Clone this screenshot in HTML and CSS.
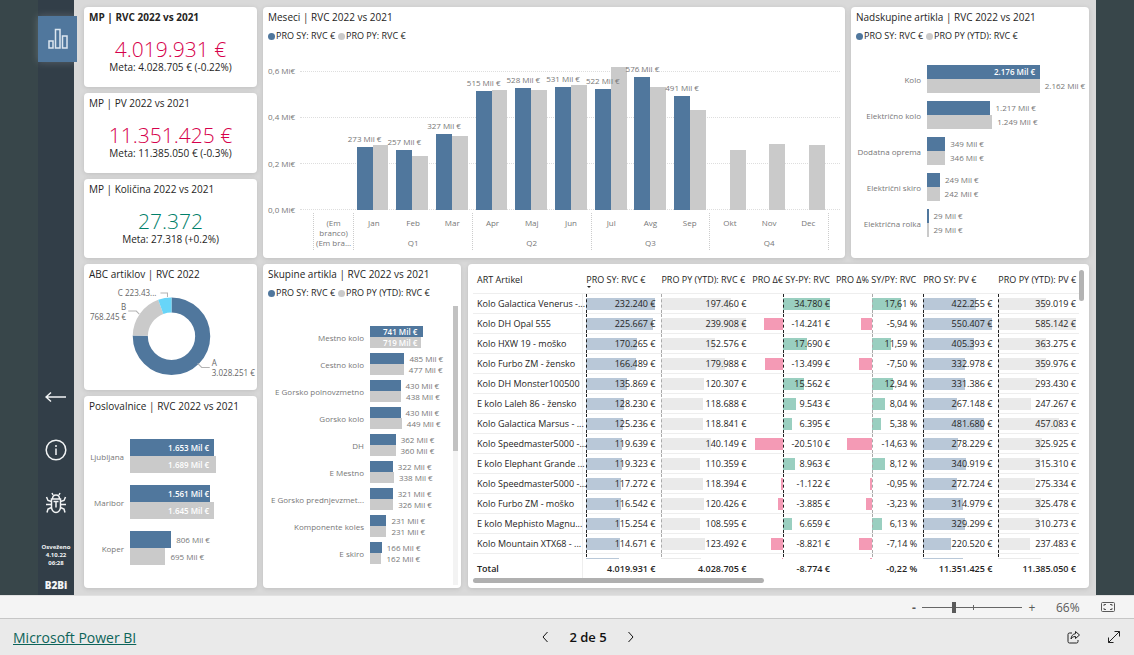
FILE: index.html
```html
<!DOCTYPE html>
<html lang="sl">
<head>
<meta charset="utf-8">
<title>Microsoft Power BI</title>
<link rel="stylesheet" href="styles.css">
</head>
<body>
<main class="stage">
  <nav class="rail" aria-label="Strani">
    <button class="rail-btn active" aria-label="Prodaja">
      <svg width="22" height="22" viewBox="0 0 22 22"><path d="M2 13h4v7H2zM8.500 1.500h4.500V20H8.500zM15.500 8H20v12h-4.500z"/></svg>
    </button>
    <div class="rail-bottom">
      <button class="rail-btn" aria-label="Nazaj"><svg width="22" height="12" viewBox="0 0 22 12"><path d="M1 6h20M6 1.500L1 6l5 4.500"/></svg></button>
      <button class="rail-btn" aria-label="Informacije"><svg width="22" height="22" viewBox="0 0 22 22"><circle cx="11" cy="11" r="9.800"/><path d="M11 9.500v6.500M11 6v2"/></svg></button>
      <button class="rail-btn" aria-label="Prijavi napako"><svg width="22" height="22" viewBox="0 0 22 22"><path d="M6.500 7h9v8c0 3-2 5.500-4.500 5.500S6.500 18 6.500 15zM7.500 7c0-2.500 1.500-4 3.500-4s3.500 1.500 3.500 4M8 3L7 1M14 3l1-2M11 9.500v6M8.500 9.500h5M6.500 12.500H1M15.500 12.500H21M6.500 9.500L3 8.500 1.500 5M15.500 9.500l3.500-1 1.500-3.500M6.500 15.500L3 17l-1 3.500M15.500 15.500L19 17l1 3.500"/></svg></button>
      <p class="refreshed">Osveženo<br>4.10.22<br>06:28</p>
      <p class="logo">B2Bi</p>
    </div>
  </nav>

  <div class="report">
    <div class="side">
      <section class="card kpi">
        <h2 class="strong">MP | RVC 2022 vs 2021</h2>
        <p class="big down">4.019.931 €</p>
        <p class="meta">Meta: 4.028.705 € (-0.22%)</p>
      </section>
      <section class="card kpi">
        <h2>MP | PV 2022 vs 2021</h2>
        <p class="big down">11.351.425 €</p>
        <p class="meta">Meta: 11.385.050 € (-0.3%)</p>
      </section>
      <section class="card kpi">
        <h2>MP | Količina 2022 vs 2021</h2>
        <p class="big up">27.372</p>
        <p class="meta">Meta: 27.318 (+0.2%)</p>
      </section>
      <section class="card">
        <h2>ABC artiklov | RVC 2022</h2>
        <svg class="donut" viewBox="0 0 162 100">
          <g fill="none" stroke-width="15">
            <circle cx="82" cy="52" r="31" pathLength="1000" stroke="#50779d" stroke-dasharray="753 247" transform="rotate(-90 82 52)"/>
            <circle cx="82" cy="52" r="31" pathLength="1000" stroke="#cacaca" stroke-dasharray="191 809" stroke-dashoffset="-753" transform="rotate(-90 82 52)"/>
            <circle cx="82" cy="52" r="31" pathLength="1000" stroke="#68d5f8" stroke-dasharray="56 944" stroke-dashoffset="-944" transform="rotate(-90 82 52)"/>
          </g>
          <path class="lead" d="M71 9h7v4M39 27h8l3 3M108 79l4 4h8"/>
          <text x="67" y="12" text-anchor="end">C 223.43...</text>
          <text x="37" y="26" text-anchor="end">B</text>
          <text x="37" y="36" text-anchor="end">768.245 €</text>
          <text x="122" y="82">A</text>
          <text x="122" y="92">3.028.251 €</text>
        </svg>
      </section>
      <section class="card">
        <h2>Poslovalnice | RVC 2022 vs 2021</h2>
        <div class="hbars stores">
          <div class="row"><span class="name">Ljubljana</span><div class="pair"><div class="line in"><i class="sy" style="--v:1653"></i><span>1.653 Mil €</span></div><div class="line in"><i class="py" style="--v:1689"></i><span>1.689 Mil €</span></div></div></div>
          <div class="row"><span class="name">Maribor</span><div class="pair"><div class="line in"><i class="sy" style="--v:1561"></i><span>1.561 Mil €</span></div><div class="line in"><i class="py" style="--v:1645"></i><span>1.645 Mil €</span></div></div></div>
          <div class="row"><span class="name">Koper</span><div class="pair"><div class="line"><i class="sy" style="--v:806"></i><span>806 Mil €</span></div><div class="line"><i class="py" style="--v:695"></i><span>695 Mil €</span></div></div></div>
        </div>
      </section>
    </div>

    <div class="wide">
      <div class="band top">
        <section class="card">
          <h2>Meseci | RVC 2022 vs 2021</h2>
          <p class="legend"><i class="sy"></i>PRO SY: RVC €<i class="py"></i>PRO PY: RVC €</p>
          <div class="months">
            <div class="yaxis"><span>0,6 Mi€</span><span>0,4 Mi€</span><span>0,2 Mi€</span><span>0,0 Mi€</span></div>
            <div class="lines"><i></i><i></i><i></i><i></i></div>
            <div class="cols">
              <div class="col"></div>
              <div class="col"><b class="sy" style="--v:273"><span>273 Mil €</span></b><b class="py" style="--v:281"></b></div>
              <div class="col"><b class="sy" style="--v:257"><span>257 Mil €</span></b><b class="py" style="--v:234"></b></div>
              <div class="col"><b class="sy" style="--v:327"><span>327 Mil €</span></b><b class="py" style="--v:320"></b></div>
              <div class="col"><b class="sy" style="--v:515"><span>515 Mil €</span></b><b class="py" style="--v:519"></b></div>
              <div class="col"><b class="sy" style="--v:528"><span>528 Mil €</span></b><b class="py" style="--v:517"></b></div>
              <div class="col"><b class="sy" style="--v:531"><span>531 Mil €</span></b><b class="py" style="--v:540"></b></div>
              <div class="col"><b class="sy" style="--v:522"><span>522 Mil €</span></b><b class="py" style="--v:617"></b></div>
              <div class="col"><b class="sy" style="--v:576"><span>576 Mil €</span></b><b class="py" style="--v:530"></b></div>
              <div class="col"><b class="sy" style="--v:491"><span>491 Mil €</span></b><b class="py" style="--v:431"></b></div>
              <div class="col"><b class="sy" style="--v:0"></b><b class="py" style="--v:260"></b></div>
              <div class="col"><b class="sy" style="--v:0"></b><b class="py" style="--v:283"></b></div>
              <div class="col"><b class="sy" style="--v:0"></b><b class="py" style="--v:279"></b></div>
            </div>
            <div class="xaxis">
              <div class="group"><span>(Em branco)</span><em>(Em bra...</em></div>
              <div class="group q"><span>Jan</span><span>Feb</span><span>Mar</span><em>Q1</em></div>
              <div class="group q"><span>Apr</span><span>Maj</span><span>Jun</span><em>Q2</em></div>
              <div class="group q"><span>Jul</span><span>Avg</span><span>Sep</span><em>Q3</em></div>
              <div class="group q"><span>Okt</span><span>Nov</span><span>Dec</span><em>Q4</em></div>
            </div>
          </div>
        </section>
        <section class="card">
          <h2>Nadskupine artikla | RVC 2022 vs 2021</h2>
          <p class="legend"><i class="sy"></i>PRO SY: RVC €<i class="py"></i>PRO PY (YTD): RVC €</p>
          <div class="hbars supers">
            <div class="row"><span class="name">Kolo</span><div class="pair"><div class="line in"><i class="sy" style="--v:2176"></i><span>2.176 Mil €</span></div><div class="line"><i class="py" style="--v:2162"></i><span>2.162 Mil €</span></div></div></div>
            <div class="row"><span class="name">Električno kolo</span><div class="pair"><div class="line"><i class="sy" style="--v:1217"></i><span>1.217 Mil €</span></div><div class="line"><i class="py" style="--v:1249"></i><span>1.249 Mil €</span></div></div></div>
            <div class="row"><span class="name">Dodatna oprema</span><div class="pair"><div class="line"><i class="sy" style="--v:349"></i><span>349 Mil €</span></div><div class="line"><i class="py" style="--v:346"></i><span>346 Mil €</span></div></div></div>
            <div class="row"><span class="name">Električni skiro</span><div class="pair"><div class="line"><i class="sy" style="--v:249"></i><span>249 Mil €</span></div><div class="line"><i class="py" style="--v:242"></i><span>242 Mil €</span></div></div></div>
            <div class="row"><span class="name">Električna rolka</span><div class="pair"><div class="line"><i class="sy" style="--v:29"></i><span>29 Mil €</span></div><div class="line"><i class="py" style="--v:29"></i><span>29 Mil €</span></div></div></div>
          </div>
        </section>
      </div>

      <div class="band bottom">
        <section class="card">
          <h2>Skupine artikla | RVC 2022 vs 2021</h2>
          <p class="legend"><i class="sy"></i>PRO SY: RVC €<i class="py"></i>PRO PY (YTD): RVC €</p>
          <div class="scroller">
            <div class="hbars groups">
              <div class="row"><span class="name">Mestno kolo</span><div class="pair"><div class="line in"><i class="sy" style="--v:741"></i><span>741 Mil €</span></div><div class="line in"><i class="py" style="--v:719"></i><span>719 Mil €</span></div></div></div>
              <div class="row"><span class="name">Cestno kolo</span><div class="pair"><div class="line"><i class="sy" style="--v:485"></i><span>485 Mil €</span></div><div class="line"><i class="py" style="--v:477"></i><span>477 Mil €</span></div></div></div>
              <div class="row"><span class="name">E Gorsko polnovzmetno</span><div class="pair"><div class="line"><i class="sy" style="--v:430"></i><span>430 Mil €</span></div><div class="line"><i class="py" style="--v:438"></i><span>438 Mil €</span></div></div></div>
              <div class="row"><span class="name">Gorsko kolo</span><div class="pair"><div class="line"><i class="sy" style="--v:430"></i><span>430 Mil €</span></div><div class="line"><i class="py" style="--v:449"></i><span>449 Mil €</span></div></div></div>
              <div class="row"><span class="name">DH</span><div class="pair"><div class="line"><i class="sy" style="--v:362"></i><span>362 Mil €</span></div><div class="line"><i class="py" style="--v:360"></i><span>360 Mil €</span></div></div></div>
              <div class="row"><span class="name">E Mestno</span><div class="pair"><div class="line"><i class="sy" style="--v:322"></i><span>322 Mil €</span></div><div class="line"><i class="py" style="--v:338"></i><span>338 Mil €</span></div></div></div>
              <div class="row"><span class="name">E Gorsko prednjevzmet...</span><div class="pair"><div class="line"><i class="sy" style="--v:321"></i><span>321 Mil €</span></div><div class="line"><i class="py" style="--v:326"></i><span>326 Mil €</span></div></div></div>
              <div class="row"><span class="name">Komponente koles</span><div class="pair"><div class="line"><i class="sy" style="--v:231"></i><span>231 Mil €</span></div><div class="line"><i class="py" style="--v:231"></i><span>231 Mil €</span></div></div></div>
              <div class="row"><span class="name">E skiro</span><div class="pair"><div class="line"><i class="sy" style="--v:166"></i><span>166 Mil €</span></div><div class="line"><i class="py" style="--v:162"></i><span>162 Mil €</span></div></div></div>
            </div>
            <div class="track"><i></i></div>
          </div>
        </section>

        <section class="card articles">
          <div class="sheet">
            <table>
              <colgroup><col class="w0"><col class="w1"><col class="w2"><col class="w3"><col class="w4"><col class="w5"><col class="w6"></colgroup>
              <thead><tr><th>ART Artikel</th><th class="sorted">PRO SY: RVC €</th><th>PRO PY (YTD): RVC €</th><th>PRO Δ€ SY-PY: RVC</th><th>PRO Δ% SY/PY: RVC</th><th>PRO SY: PV €</th><th>PRO PY (YTD): PV €</th></tr></thead>
              <tbody>
                <tr><th>Kolo Galactica Venerus -...</th><td class="c1"><div><i style="--v:232240"></i><span>232.240 €</span></div></td><td class="c2"><div><i style="--v:197460"></i><span>197.460 €</span></div></td><td class="c3"><div><i style="--v:34780"></i><span>34.780 €</span></div></td><td class="c4"><div><i style="--v:17.61"></i><span>17,61 %</span></div></td><td class="c5"><div><i style="--v:422255"></i><span>422.255 €</span></div></td><td class="c6"><div><i style="--v:359019"></i><span>359.019 €</span></div></td></tr>
                <tr><th>Kolo DH Opal 555</th><td class="c1"><div><i style="--v:225667"></i><span>225.667 €</span></div></td><td class="c2"><div><i style="--v:239908"></i><span>239.908 €</span></div></td><td class="c3"><div><i class="neg" style="--v:14241"></i><span>-14.241 €</span></div></td><td class="c4"><div><i class="neg" style="--v:5.94"></i><span>-5,94 %</span></div></td><td class="c5"><div><i style="--v:550407"></i><span>550.407 €</span></div></td><td class="c6"><div><i style="--v:585142"></i><span>585.142 €</span></div></td></tr>
                <tr><th>Kolo HXW 19 - moško</th><td class="c1"><div><i style="--v:170265"></i><span>170.265 €</span></div></td><td class="c2"><div><i style="--v:152576"></i><span>152.576 €</span></div></td><td class="c3"><div><i style="--v:17690"></i><span>17.690 €</span></div></td><td class="c4"><div><i style="--v:11.59"></i><span>11,59 %</span></div></td><td class="c5"><div><i style="--v:405393"></i><span>405.393 €</span></div></td><td class="c6"><div><i style="--v:363275"></i><span>363.275 €</span></div></td></tr>
                <tr><th>Kolo Furbo ZM - žensko</th><td class="c1"><div><i style="--v:166489"></i><span>166.489 €</span></div></td><td class="c2"><div><i style="--v:179988"></i><span>179.988 €</span></div></td><td class="c3"><div><i class="neg" style="--v:13499"></i><span>-13.499 €</span></div></td><td class="c4"><div><i class="neg" style="--v:7.5"></i><span>-7,50 %</span></div></td><td class="c5"><div><i style="--v:332978"></i><span>332.978 €</span></div></td><td class="c6"><div><i style="--v:359976"></i><span>359.976 €</span></div></td></tr>
                <tr><th>Kolo DH Monster100500</th><td class="c1"><div><i style="--v:135869"></i><span>135.869 €</span></div></td><td class="c2"><div><i style="--v:120307"></i><span>120.307 €</span></div></td><td class="c3"><div><i style="--v:15562"></i><span>15.562 €</span></div></td><td class="c4"><div><i style="--v:12.94"></i><span>12,94 %</span></div></td><td class="c5"><div><i style="--v:331386"></i><span>331.386 €</span></div></td><td class="c6"><div><i style="--v:293430"></i><span>293.430 €</span></div></td></tr>
                <tr><th>E kolo Laleh 86 - žensko</th><td class="c1"><div><i style="--v:128230"></i><span>128.230 €</span></div></td><td class="c2"><div><i style="--v:118688"></i><span>118.688 €</span></div></td><td class="c3"><div><i style="--v:9543"></i><span>9.543 €</span></div></td><td class="c4"><div><i style="--v:8.04"></i><span>8,04 %</span></div></td><td class="c5"><div><i style="--v:267148"></i><span>267.148 €</span></div></td><td class="c6"><div><i style="--v:247267"></i><span>247.267 €</span></div></td></tr>
                <tr><th>Kolo Galactica Marsus - ...</th><td class="c1"><div><i style="--v:125236"></i><span>125.236 €</span></div></td><td class="c2"><div><i style="--v:118841"></i><span>118.841 €</span></div></td><td class="c3"><div><i style="--v:6395"></i><span>6.395 €</span></div></td><td class="c4"><div><i style="--v:5.38"></i><span>5,38 %</span></div></td><td class="c5"><div><i style="--v:481680"></i><span>481.680 €</span></div></td><td class="c6"><div><i style="--v:457083"></i><span>457.083 €</span></div></td></tr>
                <tr><th>Kolo Speedmaster5000 -...</th><td class="c1"><div><i style="--v:119639"></i><span>119.639 €</span></div></td><td class="c2"><div><i style="--v:140149"></i><span>140.149 €</span></div></td><td class="c3"><div><i class="neg" style="--v:20510"></i><span>-20.510 €</span></div></td><td class="c4"><div><i class="neg" style="--v:14.63"></i><span>-14,63 %</span></div></td><td class="c5"><div><i style="--v:278229"></i><span>278.229 €</span></div></td><td class="c6"><div><i style="--v:325925"></i><span>325.925 €</span></div></td></tr>
                <tr><th>E kolo Elephant Grande ...</th><td class="c1"><div><i style="--v:119323"></i><span>119.323 €</span></div></td><td class="c2"><div><i style="--v:110359"></i><span>110.359 €</span></div></td><td class="c3"><div><i style="--v:8963"></i><span>8.963 €</span></div></td><td class="c4"><div><i style="--v:8.12"></i><span>8,12 %</span></div></td><td class="c5"><div><i style="--v:340919"></i><span>340.919 €</span></div></td><td class="c6"><div><i style="--v:315310"></i><span>315.310 €</span></div></td></tr>
                <tr><th>Kolo Speedmaster5000 -...</th><td class="c1"><div><i style="--v:117272"></i><span>117.272 €</span></div></td><td class="c2"><div><i style="--v:118394"></i><span>118.394 €</span></div></td><td class="c3"><div><i class="neg" style="--v:1122"></i><span>-1.122 €</span></div></td><td class="c4"><div><i class="neg" style="--v:0.95"></i><span>-0,95 %</span></div></td><td class="c5"><div><i style="--v:272724"></i><span>272.724 €</span></div></td><td class="c6"><div><i style="--v:275334"></i><span>275.334 €</span></div></td></tr>
                <tr><th>Kolo Furbo ZM - moško</th><td class="c1"><div><i style="--v:116542"></i><span>116.542 €</span></div></td><td class="c2"><div><i style="--v:120426"></i><span>120.426 €</span></div></td><td class="c3"><div><i class="neg" style="--v:3885"></i><span>-3.885 €</span></div></td><td class="c4"><div><i class="neg" style="--v:3.23"></i><span>-3,23 %</span></div></td><td class="c5"><div><i style="--v:314979"></i><span>314.979 €</span></div></td><td class="c6"><div><i style="--v:325478"></i><span>325.478 €</span></div></td></tr>
                <tr><th>E kolo Mephisto Magnu...</th><td class="c1"><div><i style="--v:115254"></i><span>115.254 €</span></div></td><td class="c2"><div><i style="--v:108595"></i><span>108.595 €</span></div></td><td class="c3"><div><i style="--v:6659"></i><span>6.659 €</span></div></td><td class="c4"><div><i style="--v:6.13"></i><span>6,13 %</span></div></td><td class="c5"><div><i style="--v:329299"></i><span>329.299 €</span></div></td><td class="c6"><div><i style="--v:310273"></i><span>310.273 €</span></div></td></tr>
                <tr><th>Kolo Mountain XTX68 - ...</th><td class="c1"><div><i style="--v:114671"></i><span>114.671 €</span></div></td><td class="c2"><div><i style="--v:123492"></i><span>123.492 €</span></div></td><td class="c3"><div><i class="neg" style="--v:8821"></i><span>-8.821 €</span></div></td><td class="c4"><div><i class="neg" style="--v:7.14"></i><span>-7,14 %</span></div></td><td class="c5"><div><i style="--v:220520"></i><span>220.520 €</span></div></td><td class="c6"><div><i style="--v:237483"></i><span>237.483 €</span></div></td></tr>
                <tr><th>E kolo Mephisto Lady ...</th><td class="c1"><div><i style="--v:111882"></i><span>111.882 €</span></div></td><td class="c2"><div><i style="--v:112883"></i><span>112.883 €</span></div></td><td class="c3"><div><i class="neg" style="--v:1001"></i><span>-1.001 €</span></div></td><td class="c4"><div><i class="neg" style="--v:0.89"></i><span>-0,89 %</span></div></td><td class="c5"><div><i style="--v:318881"></i><span>318.881 €</span></div></td><td class="c6"><div><i style="--v:321881"></i><span>321.881 €</span></div></td></tr>
              </tbody>
              <tfoot><tr><th>Total</th><td>4.019.931 €</td><td>4.028.705 €</td><td>-8.774 €</td><td>-0,22 %</td><td>11.351.425 €</td><td>11.385.050 €</td></tr></tfoot>
            </table>
          </div>
          <div class="vthumb"></div>
          <div class="hthumb"></div>
        </section>
      </div>
    </div>
  </div>
</main>

<div class="zoombar">
  <button aria-label="Pomanjšaj">-</button>
  <input type="range" min="10" max="190" value="66" aria-label="Povečava">
  <button aria-label="Povečaj">+</button>
  <output>66%</output>
  <button class="fit" aria-label="Prilagodi strani"><svg width="14" height="12" viewBox="0 0 14 12"><rect x=".5" y="1.500" width="13" height="9" rx="1"/><path d="M5 3.500H3V5M9 3.500h2V5M5 8.500H3V7M9 8.500h2V7"/></svg></button>
</div>

<footer class="footer">
  <a href="#">Microsoft Power BI</a>
  <div class="pager">
    <button aria-label="Prejšnja stran"><svg width="8" height="12" viewBox="0 0 8 12"><path d="M6.500 1L2 6l4.500 5"/></svg></button>
    <span>2 de 5</span>
    <button aria-label="Naslednja stran"><svg width="8" height="12" viewBox="0 0 8 12"><path d="M1.500 1L6 6l-4.500 5"/></svg></button>
  </div>
  <div class="actions">
    <button aria-label="Skupna raba"><svg width="14" height="14" viewBox="0 0 14 14"><path d="M5 3H2.500Q1 3 1 4.500v7Q1 13 2.500 13h7q1.500 0 1.500-1.500V10"/><path d="M8.500 1.500L12.500 5l-4 3.500V6.500C6 6.500 5 7.500 4 9c.3-3 1.700-5 4.500-5.300z"/></svg></button>
    <button aria-label="Celozaslonski način"><svg width="14" height="14" viewBox="0 0 14 14"><path d="M1.500 12.500l11-11M7.500 1.500h5v5M1.500 7.500v5h5"/></svg></button>
  </div>
</footer>
</body>
</html>
```
FILE: styles.css
```css
* { box-sizing: border-box; }
body {
  margin: 0;
  height: 100vh;
  display: flex;
  flex-direction: column;
  font-family: "Open Sans", "Noto Sans", sans-serif;
  font-size: 9px;
  color: #252423;
  background: #eaeaea;
}
h2, p { margin: 0; }
h2 { font-size: 10px; line-height: 14px; font-weight: 400; white-space: nowrap; }
h2.strong { font-weight: 700; }
button { border: 0; padding: 0; background: none; font: inherit; color: inherit; display: flex; align-items: center; justify-content: center; }
svg { fill: none; stroke: currentColor; }
i { display: block; }
.sy { background: #50779d; }
.py { background: #cacaca; }

.stage { flex: 1; min-height: 0; display: flex; padding: 0 38px; background: #38464a; }
.rail { width: 36px; display: flex; flex-direction: column; padding-top: 16px; background: #323e48; color: #f2f4f5; z-index: 1; }
.rail-btn svg { stroke-width: 1.5; }
.rail-btn.active { width: 39px; height: 46px; background: #50779d; color: #dbe6f0; box-shadow: 0 0 8px rgba(255, 255, 255, .2); }
.rail-bottom { margin-top: auto; display: flex; flex-direction: column; align-items: center; }
.rail-bottom .rail-btn { height: 22px; margin-bottom: 31px; }
.refreshed { font-size: 6px; line-height: 8px; font-weight: 700; text-align: center; margin-top: -2px; }
.logo { font-size: 10px; line-height: 14px; font-weight: 800; margin: 11px 0 3px; }

.report { flex: 1; min-width: 0; display: flex; gap: 6px; padding: 7px 7px 7px 10px; background: #d9d9d9; }
.side { width: 173px; display: grid; grid-template-rows: 80fr 79fr 79fr 126fr 191fr; gap: 6px; }
.wide { flex: 1; min-width: 0; display: grid; grid-template-rows: 251fr 324fr; gap: 6px; }
.band { display: grid; gap: 6px; min-height: 0; }
.top { grid-template-columns: 582fr 238fr; }
.bottom { grid-template-columns: 198fr 621fr; gap: 7px; }
.card { min-width: 0; min-height: 0; display: flex; flex-direction: column; padding: 3px 5px; background: #fff; border-radius: 4px; box-shadow: 0 1px 5px rgba(0, 0, 0, .12); }

.kpi { text-align: center; }
.kpi h2 { text-align: left; }
.big { font-size: 21px; line-height: 26px; font-weight: 300; margin-top: 12px; }
.down { color: #d6004b; }
.up { color: #00806a; }
.meta { font-size: 10px; line-height: 12px; margin-top: -1px; }

.legend { display: flex; align-items: center; line-height: 14px; margin-top: 5px; white-space: nowrap; }
.legend i { width: 7px; height: 7px; border-radius: 50%; margin: 0 1px 0 3px; }
.legend i:first-child { margin-left: 0; }

.donut { display: block; width: 100%; flex: 1; min-height: 0; overflow: visible; }
.donut text { font-size: 8px; fill: #666; stroke: none; }
.donut .lead { stroke: #b3b3b3; }

.hbars { display: flex; flex-direction: column; font-size: 8px; color: #777; --h: 14px; }
.row { display: flex; align-items: center; }
.name { width: var(--label); padding-right: 6px; text-align: right; white-space: nowrap; }
.pair { flex: 1; min-width: 0; }
.line { display: flex; align-items: center; height: var(--h); line-height: 10px; white-space: nowrap; }
.line i { flex: none; height: 100%; width: calc(var(--v) / var(--max) * 100%); }
.line span { padding-left: 5px; }
.line.in { display: grid; }
.line.in i, .line.in span { grid-area: 1 / 1; }
.line.in span { width: calc(var(--full) * 1%); padding: 0 5px 0 0; text-align: right; color: #fff; font-weight: 600; }
.supers { --label: 71px; --max: 3010; --full: 72; margin-top: 22px; gap: 8px; }
.stores { --label: 41px; --max: 2390; --full: 69; --h: 17px; margin-top: 26px; gap: 12px; }
.groups { --label: 102px; --max: 1170; --full: 63; --h: 11px; flex: 1; padding-top: 21px; gap: 5px; }
.scroller { flex: 1; min-height: 0; display: flex; margin-top: 5px; }
.track { width: 5px; background: #f3f3f3; margin: 1px -2px 0 0; }
.track i { height: 52%; background: #c2c2c2; }

.months { flex: 1; min-height: 0; display: grid; grid-template: 1fr 45px / 32px 1fr; margin-top: 28px; font-size: 8px; line-height: 10px; color: #777; }
.yaxis { display: flex; flex-direction: column; justify-content: space-between; margin: -5px 0; white-space: nowrap; }
.lines { grid-area: 1 / 2; display: flex; flex-direction: column; justify-content: space-between; }
.lines i { border-top: 1px dotted #dedede; }
.cols { grid-area: 1 / 2; display: flex; padding: 0 11px 0 13px; }
.col { flex: 1; display: flex; align-items: flex-end; justify-content: center; }
.col b { width: 40%; height: calc(var(--v) / 600 * 100%); display: flex; justify-content: center; font-weight: 400; }
.col .sy { position: relative; }
.col span { margin-top: -13px; height: 10px; white-space: nowrap; }
.xaxis { grid-area: 2 / 2; display: flex; padding: 3px 11px 0 13px; margin-bottom: 5px; }
.group { flex: 1; display: grid; grid-template-rows: 20px 10px; align-content: start; padding-top: 5px; text-align: center; border-left: 1px dotted #ccc; }
.group.q { flex: 3; grid-template-columns: repeat(3, 1fr); }
.group:last-child { border-right: 1px dotted #ccc; }
.group em { font-style: normal; grid-column: 1 / -1; white-space: nowrap; }

.articles { display: grid; grid-template: 1fr 10px / 1fr 5px; padding: 6px 5px 0; }
.sheet { overflow: hidden; min-height: 0; }
.vthumb { height: 31px; border-radius: 3px; background: #b3b3b3; }
.hthumb { width: 48%; height: 5px; border-radius: 3px; background: #b0b0b0; }
table { width: 100%; table-layout: fixed; border-spacing: 0; }
.w0 { width: 18.2%; } .w1 { width: 12.4%; } .w2 { width: 15%; } .w3 { width: 13.8%; } .w4 { width: 14.4%; } .w5 { width: 12.4%; } .w6 { width: 13.8%; }
th, td { padding: 0 3px; white-space: nowrap; text-align: left; font-weight: 400; border-bottom: 1px solid #eee; }
th:first-child { padding-left: 4px; border-right: 1px solid #eee; }
th:last-child { padding-right: 0; }
thead th { height: 24px; line-height: 12px; padding-top: 4px; vertical-align: top; }
thead th:first-child { border-right: 0; }
.sorted::after { content: ""; display: block; width: 0; margin-left: 1px; border: 2px solid transparent; border-top-color: #252423; border-bottom: 0; }
td > div { display: grid; align-items: center; height: 19px; --zero: 0%; --tint: #b9c8d8; --axis: #222; --max: 1; }
td > div > *, td > div::before { grid-area: 1 / 1; }
td > div::before { content: ""; height: 100%; width: 0; margin-left: var(--zero); border-left: 1px dashed var(--axis); z-index: 1; }
td i { height: 12px; margin-left: var(--zero); width: calc(var(--v) / var(--max) * 100%); background: var(--tint); }
td i.neg { margin-left: calc(var(--zero) - var(--v) / var(--max) * 100%); --tint: #f49ab5; }
td span { text-align: right; z-index: 1; }
.c1 > div { --max: 233000; }
.c2 > div { --max: 240000; --tint: #eaeaea; --axis: #aaa; }
.c3 > div { --max: 55290; --zero: 37%; --tint: #9acfc0; }
.c4 > div { --max: 41.4; --zero: 35%; --tint: #9acfc0; --axis: #aaa; }
.c4 { padding-left: 14px; }
.c3 { padding-left: 6px; }
.c5 > div { --max: 551000; }
.c6 > div { --max: 586000; --tint: #eaeaea; }
tfoot th, tfoot td { position: sticky; bottom: 0; z-index: 2; height: 19px; background: #fff; border-bottom: 0; font-weight: 600; text-align: right; }
tfoot th { text-align: left; }

.zoombar { height: 24px; display: flex; align-items: center; justify-content: flex-end; padding-right: 19px; background: #f4f4f4; border-bottom: 1px solid #c6c6c6; border-top: 1px solid #e1e1e1; font-size: 12px; color: #5a5a5a; }
.zoombar button { width: 12px; }
.zoombar button:first-child { font-weight: 700; }
.zoombar output { width: 22px; margin: 0 23px 0 18px; }
.zoombar .fit { width: 14px; }
.zoombar input { appearance: none; width: 100px; height: 12px; margin: 0 4px 0 2px; background: linear-gradient(#666, #666) 51px 50% / 1px 5px no-repeat, linear-gradient(#666, #666) 0 50% / 100% 1px no-repeat; }
.zoombar input::-webkit-slider-thumb { appearance: none; width: 4px; height: 11px; background: #5a5a5a; }

.footer { height: 36px; display: grid; grid-template-columns: 1fr auto 1fr; align-items: center; padding: 2px 13px; }
.footer a { font-size: 14px; color: #0d6459; }
.pager { display: flex; align-items: center; gap: 20px; padding-left: 42px; font-size: 13px; font-weight: 600; color: #111; }
.actions { display: flex; justify-content: flex-end; gap: 26px; color: #222; }
```
